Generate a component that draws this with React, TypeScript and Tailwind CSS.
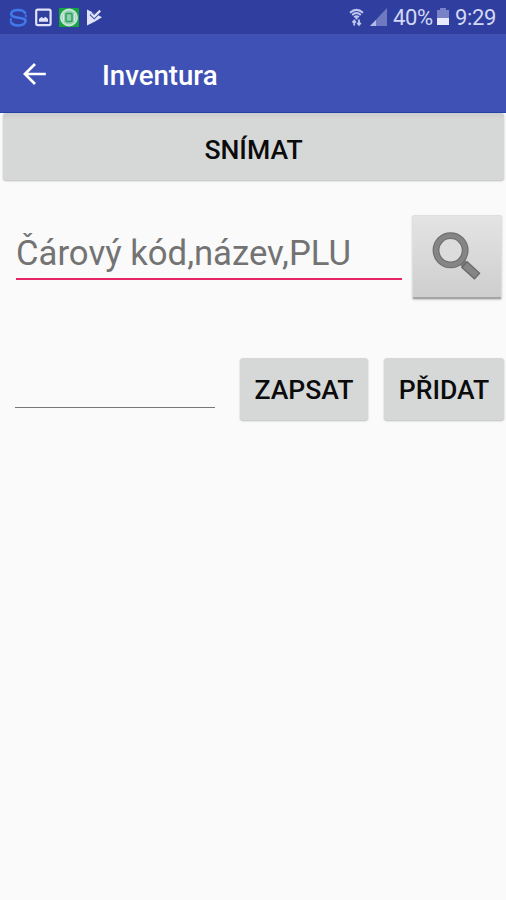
import React from "react";

function StatusBar() {
  return (
    <div className="flex h-[34px] items-center bg-[#303f9f] pt-px">
      <svg className="ml-[9px]" width="19" height="20" viewBox="0 0 19 20" fill="none" stroke="#4179ed" strokeWidth="2.6" strokeLinecap="round">
        <path d="M16 5C14.5 1 3.5 1 2.3 5C1.5 8.5 5 9 9.5 9.7C14 10.4 17.5 11 16.3 14C15 18.5 4 18.5 2.3 14.5" />
        <path d="M1.8 11V12.8M16.8 7.5V8.6" strokeWidth="2" />
      </svg>
      <svg className="ml-[7px]" width="17" height="20" viewBox="0 0 17 20" fill="none">
        <rect x="1.2" y="1.7" width="14.4" height="15.4" rx="1.6" stroke="#dfe2f8" strokeWidth="2.2" />
        <path d="M4 13.8V11L6.5 9L8.5 10.2L10.5 8.7L13 11V13.8Z" fill="#dfe2f8" />
      </svg>
      <svg className="ml-[7px]" width="20" height="20" viewBox="0 0 20 20" fill="none">
        <rect width="20" height="19" rx="1" fill="#16a43c" />
        <circle cx="10" cy="9.5" r="8" fill="#8fd0b0" stroke="#c5e4da" strokeWidth="2" />
        <rect x="7" y="5.5" width="6" height="8" rx="1" stroke="#31a05b" strokeWidth="1.5" />
        <path d="M4.5 6V13M15.5 6V13" stroke="#d2eae2" strokeWidth="1.3" />
      </svg>
      <svg className="ml-[8px]" width="16" height="20" viewBox="0 0 16 20">
        <path d="M0 1.5L8 5.5L15 9.3L8 13.5L0 17.5Z" fill="#dfe2f8" />
        <path d="M4 5.5L7.2 8.6L13.5 2" stroke="#303f9f" strokeWidth="4.2" fill="none" />
        <path d="M4 5.5L7.2 8.6L13.2 2.6" stroke="#dfe2f8" strokeWidth="2.2" fill="none" />
      </svg>
      <svg className="ml-auto" width="17" height="20" viewBox="0 0 17 20" fill="none" stroke="#bfc7f0">
        <path d="M1 4.7Q7.5 -1 14 4.7M3.2 7Q7.5 3 11.8 7M5.2 9.2Q7.5 7.2 9.8 9.2" strokeWidth="2" />
        <path d="M7.5 8.5V11.5" strokeWidth="2" />
        <path d="M5.2 17.5V13M3.4 14.5L5.2 12.5L7 14.5M10 11.5V16.5M8.2 14.8L10 16.8L11.8 14.8" strokeWidth="1.8" />
      </svg>
      <svg className="ml-[4px]" width="18" height="20" viewBox="0 0 18 20">
        <path d="M17 0V18H0Z" fill="#6e79bf" />
        <path d="M6 12V18H0Z" fill="#b3bbe8" />
      </svg>
      <span className="ml-[5px] w-[41px] whitespace-nowrap text-[22px] leading-[32px] tracking-[-0.35px] text-[#d3d8f6]">40%</span>
      <svg className="ml-[3px]" width="12" height="20" viewBox="0 0 12 20">
        <path d="M3 0H9V2H12V10H0V2H3Z" fill="#7883c7" />
        <path d="M0 10H12V17H0Z" fill="#e7eaff" />
      </svg>
      <span className="mr-[11px] ml-[6px] w-[40px] whitespace-nowrap text-[22px] leading-[32px] tracking-[-0.35px] text-[#d3d8f6]">9:29</span>
    </div>
  );
}

function Toolbar() {
  return (
    <header className="flex h-[79px] items-center border-b border-[#2742ab] bg-[#3f51b5] pt-px">
      <button className="ml-[23px]" aria-label="Zpět">
        <svg width="24" height="24" viewBox="0 0 24 24" fill="none" stroke="white" strokeWidth="2.7">
          <path d="M22.8 12H2M12 2L1.9 12L12 22" />
        </svg>
      </button>
      <h1 className="ml-[55px] pt-[5px] text-[27.6px] leading-[36px] font-medium text-white">Inventura</h1>
    </header>
  );
}

const buttonClass =
  "flex items-center justify-center rounded-[3px] bg-[#d6d8d7] text-[26.6px] leading-none font-medium whitespace-nowrap text-[#0b0b0b] shadow-[0_1px_2px_rgba(0,0,0,0.25)]";

export default function App() {
  return (
    <div className="h-[900px] w-[506px] overflow-hidden bg-[#fafafa] font-['Roboto','Liberation_Sans',sans-serif]">
      <StatusBar />
      <Toolbar />
      <main>
        <div className="pr-[2px] pl-[3px]">
          <button className={`${buttonClass} h-[67px] w-full bg-linear-to-b from-[#cbcdcd] to-[#d6d8d7] to-[6px] pt-[8px]`}>SNÍMAT</button>
        </div>
        <div className="mt-[35px] flex h-[84px] pl-4">
          <div className="h-[65px] w-[386px] border-b-2 border-[#e52467]">
            <input
              className="block h-[60px] w-full pt-[15px] text-[34.7px] leading-[42px] outline-none placeholder:text-[#737373]"
              placeholder="Čárový kód,název,PLU"
            />
          </div>
          <button
            aria-label="Hledat"
            className="ml-[10px] flex h-[84px] w-[90px] items-center justify-center rounded-[2px] border border-b-2 border-[#dedede] border-b-[#a5a5a5] bg-linear-to-b from-[#e4e4e4] to-[#cecece] shadow-[0_1px_2px_rgba(0,0,0,0.2)]"
          >
            <svg width="50" height="50" viewBox="0 0 50 50" fill="none">
              <path d="M28 28L36 36" stroke="#7c7c7c" strokeWidth="7" />
              <path d="M32 32.2L45.5 44.5" stroke="#666" strokeWidth="9" />
              <path d="M33 33L44.7 43.7" stroke="#858585" strokeWidth="6.5" />
              <circle cx="18.6" cy="18.3" r="14.6" fill="#dcdcdc" stroke="#6e6e6e" strokeWidth="6.8" />
              <circle cx="18.6" cy="18.3" r="14.6" stroke="#858585" strokeWidth="4.6" />
            </svg>
          </button>
        </div>
        <div className="mt-[59px] flex h-[62px] pl-[15px]">
          <input aria-label="Množství" className="h-[50px] w-[200px] border-b border-[#777] text-[30px] outline-none" />
          <button className={`${buttonClass} ml-[25px] h-[62px] w-[128px] pt-[2px]`}>ZAPSAT</button>
          <button className={`${buttonClass} ml-4 h-[62px] w-[120px] pt-[2px]`}>PŘIDAT</button>
        </div>
      </main>
    </div>
  );
}
